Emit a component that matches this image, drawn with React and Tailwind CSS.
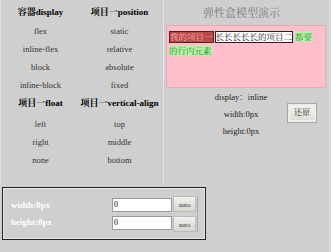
import React from "react";

const serif = { fontFamily: '"Liberation Serif", "Noto Serif CJK SC", "Noto Sans CJK SC", serif' };

const Cell = ({ children, bold }) => (
  <div className={`h-[18px] flex items-center justify-center ${bold ? "font-bold text-[9px] text-black" : "text-[8.5px] text-[#333]"}`}>
    {children}
  </div>
);

export default function App() {
  return (
    <div className="w-[331px] h-[252px] bg-[#cfcfcf] overflow-hidden relative" style={serif}>
      <div className="flex h-[185px]">
        {/* left: option lists */}
        <div className="w-[164px] border-r border-[#e2e2e2] border-l pt-[4px]">
          <div className="grid grid-cols-2 w-[158px]">
            <Cell bold>容器display</Cell>
            <Cell bold>项目一position</Cell>
            <Cell>flex</Cell>
            <Cell>static</Cell>
            <Cell>inline-flex</Cell>
            <Cell>relative</Cell>
            <Cell>block</Cell>
            <Cell>absolute</Cell>
            <Cell>inline-block</Cell>
            <Cell>fixed</Cell>
          </div>
          <div className="grid grid-cols-2 w-[158px] mt-[1px]">
            <Cell bold>项目一float</Cell>
            <Cell bold>项目一vertical-align</Cell>
          </div>
          <div className="grid grid-cols-2 w-[158px] mt-[2px]">
            <Cell>left</Cell>
            <Cell>top</Cell>
            <Cell>right</Cell>
            <Cell>middle</Cell>
            <Cell>none</Cell>
            <Cell>bottom</Cell>
          </div>
        </div>

        {/* right: demo */}
        <div className="flex-1 pt-[7px]">
          <div className="text-center text-[11px] text-[#7a7a7a] leading-[13px] pr-[12px]">弹性盒模型演示</div>
          <div className="ml-[2px] mt-[5px] w-[160px] h-[63px] bg-[#ffc0cb] border border-[#e6a9b5] pl-[2px] pr-[9px] pt-[4px] text-[8.5px] leading-[14px]">
            <div className="whitespace-nowrap">
              <span className="bg-[#b84a4a] text-[#ffb3b3] border border-[#5a1f1f]">我的项目一</span>
              <span className="bg-white text-[#222] border border-[#222] ml-[1px]">长长长长长的项目二</span>
              <span className="text-[#1a9a1a] bg-[#b8f0a8] ml-[2px]">都要</span>
            </div>
            <div>
              <span className="text-[#1a9a1a] bg-[#b8f0a8]">的行内元素</span>
            </div>
          </div>
          <div className="flex mt-[1px]">
            <div className="w-[90px] ml-[32px] flex flex-col items-center text-[8.5px] text-[#222] leading-[17px]">
              <div>display：inline</div>
              <div>width:0px</div>
              <div>height:0px</div>
            </div>
            <div className="pt-[9px] ml-[1px]">
              <button className="w-[30px] h-[20px] text-[8px] text-[#222] border border-[#a8a8a8] bg-gradient-to-b from-[#f6f6f0] to-[#dcdcd4] shadow-[inset_0_0_0_2px_#ededea]">
                还原
              </button>
            </div>
          </div>
        </div>
      </div>

      {/* bottom control box */}
      <div className="ml-[2px] mt-[2px] w-[204px] h-[53px] border border-[#222] shadow-[inset_0_0_0_1px_#e8e8e8] flex items-center pl-[8px] pr-[7px]">
        <div className="flex-1 flex flex-col gap-[4px] text-white font-bold text-[9px] leading-[13px]">
          <div>width:0px</div>
          <div>height:0px</div>
        </div>
        <div className="flex flex-col gap-[4px]">
          <input defaultValue="0" className="w-[60px] h-[14px] bg-white border border-[#999] text-[8px] px-[1px] text-black outline-none" />
          <input defaultValue="0" className="w-[60px] h-[14px] bg-white border border-[#999] text-[8px] px-[1px] text-black outline-none" />
        </div>
        <div className="flex flex-col gap-[4px] ml-[1px] border-r border-[#aaa] pr-[1px]">
          <button className="w-[23px] h-[16px] text-[7px] text-[#333] border border-[#bbb] bg-gradient-to-b from-[#f2f2ec] to-[#d6d6ce] flex items-end justify-center">auto</button>
          <button className="w-[23px] h-[16px] text-[7px] text-[#333] border border-[#bbb] bg-gradient-to-b from-[#f2f2ec] to-[#d6d6ce] flex items-end justify-center">auto</button>
        </div>
      </div>
      <div className="absolute right-[1px] top-0 h-full border-r border-[#e2e2e2]" />
    </div>
  );
}
